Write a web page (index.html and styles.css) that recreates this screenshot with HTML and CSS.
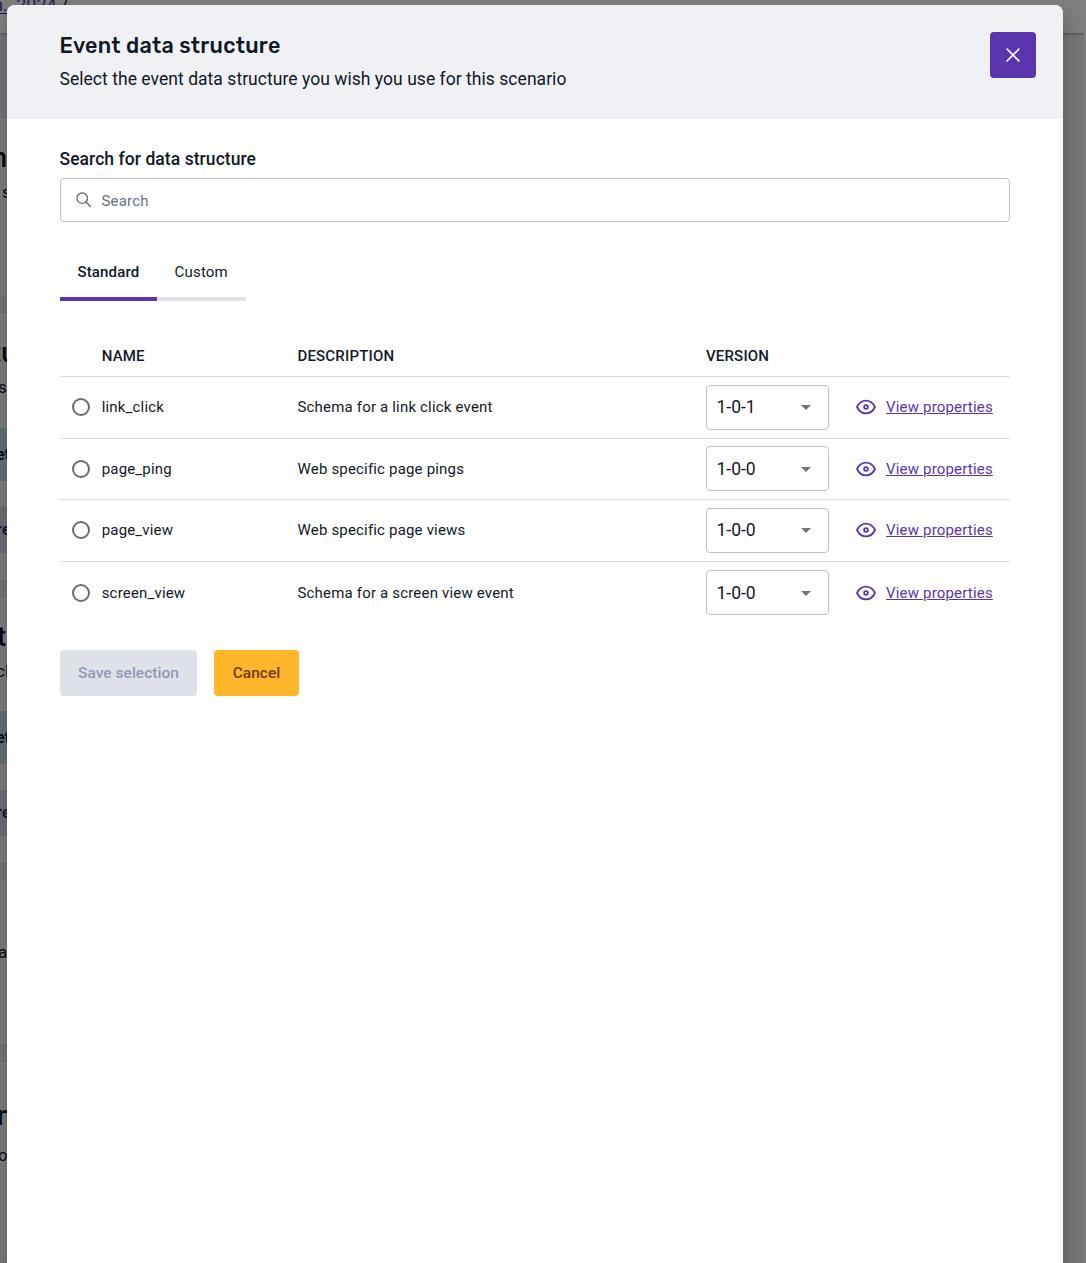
FILE: index.html
```html
<!DOCTYPE html>
<html lang="en">
<head>
<meta charset="utf-8">
<title>Event data structure</title>
<link rel="stylesheet" href="styles.css">
</head>
<body>
<svg class="defs" aria-hidden="true">
  <symbol id="eye" viewBox="0 0 20 16"><path d="M1 8C3 3.900 6.200 1.600 10 1.600S17 3.900 19 8c-2 4.100-5.200 6.400-9 6.400S3 12.100 1 8Z" fill="none" stroke="currentColor" stroke-width="1.800" stroke-linejoin="round"/><circle cx="10" cy="8" r="1.900" fill="none" stroke="currentColor" stroke-width="1.800"/></symbol>
</svg>
<div class="page" aria-hidden="true">
  <div class="crumbs"><a>n. 2024</a> /</div>
  <section class="panel first"><h3>n</h3><p class="inset">s</p></section>
  <section class="panel tall"><h3>tu</h3><p>s</p><div class="info">et</div><div class="pill">re</div></section>
  <section class="panel tall third"><h3>t</h3><p>cl</p><div class="info">et</div><div class="pill">re</div></section>
  <section class="panel fourth"><p>a</p></section>
  <section class="panel last"><h3>n</h3><p>o</p></section>
</div>
<div class="backdrop">
  <main class="dialog">
    <header class="head">
      <div class="heading">
        <h1>Event data structure</h1>
        <p>Select the event data structure you wish you use for this scenario</p>
      </div>
      <button class="close" aria-label="Close"><svg width="14" height="14" viewBox="0 0 14 14"><path d="M1 1l12 12M13 1L1 13" stroke="#fff" stroke-width="1.600" stroke-linecap="round"/></svg></button>
    </header>
    <div class="content">
      <label class="label">Search for data structure</label>
      <div class="search">
        <svg width="16" height="16" viewBox="0 0 16 16"><circle cx="6.200" cy="6.200" r="5.200" fill="none" stroke="#6c6c6c" stroke-width="1.400"/><path d="M10 10l4.500 4.500" stroke="#6c6c6c" stroke-width="1.500" stroke-linecap="round"/></svg>
        <span>Search</span>
      </div>
      <nav class="tabs"><div class="tab active">Standard</div><div class="tab">Custom</div></nav>
      <div class="table">
        <div class="row top"><span></span><span>NAME</span><span>DESCRIPTION</span><span>VERSION</span></div>
        <div class="row raised"><i class="radio"></i><span>link_click</span><span>Schema for a link click event</span><div class="select">1-0-1<i class="caret"></i></div><div class="view"><svg><use href="#eye"/></svg><a>View properties</a></div></div>
        <div class="row short"><i class="radio"></i><span>page_ping</span><span>Web specific page pings</span><div class="select">1-0-0<i class="caret"></i></div><div class="view"><svg><use href="#eye"/></svg><a>View properties</a></div></div>
        <div class="row raised"><i class="radio"></i><span>page_view</span><span>Web specific page views</span><div class="select">1-0-0<i class="caret"></i></div><div class="view"><svg><use href="#eye"/></svg><a>View properties</a></div></div>
        <div class="row end"><i class="radio"></i><span>screen_view</span><span>Schema for a screen view event</span><div class="select">1-0-0<i class="caret"></i></div><div class="view"><svg><use href="#eye"/></svg><a>View properties</a></div></div>
      </div>
      <div class="actions"><button class="save" disabled>Save selection</button><button class="cancel">Cancel</button></div>
    </div>
  </main>
</div>
</body>
</html>
```
FILE: styles.css
```css
* { box-sizing: border-box; }
body { margin: 0; height: 1263px; overflow: hidden; position: relative; font-family: Roboto, sans-serif; color: #111827; font-size: 15px; letter-spacing: .18px; }
h1, h3, p { margin: 0; font-weight: 400; }
button { border: 0; padding: 0; font: inherit; letter-spacing: inherit; }
.defs { position: absolute; width: 0; height: 0; }

.page { height: 1263px; width: 1084px; background: #eceff4; overflow: hidden; display: flex; flex-direction: column; box-shadow: 2px 0 #fff; }
.crumbs { flex: none; height: 33px; background: #fff; font-size: 18px; line-height: 9px; letter-spacing: 0; text-indent: -7px; margin-bottom: 85px; box-shadow: 0 1px 3px #0005; white-space: pre; }
.crumbs a { color: #5b35ad; text-decoration: underline; text-underline-offset: 2px; word-spacing: 4px; }
.panel { flex: none; width: 1034px; background: #fff; box-shadow: 0 0 2px #0003; margin-bottom: 17px; overflow: hidden; }
.panel h3 { font-size: 27px; line-height: 32px; font-weight: 500; padding-top: 24px; text-indent: -8px; }
.panel p { font-size: 17px; line-height: 20px; margin-top: 8px; text-indent: -2px; }
.panel p.inset { text-indent: 2px; }
.first { height: 178px; }
.tall { height: 267px; }
.third { height: 266px; }
.panel.third h3 { text-indent: -3px; }
.panel.third p { text-indent: -4px; }
.panel.fourth { height: 165px; }
.panel.fourth p { margin-top: 62px; }
.panel.last { height: 200px; }
.panel.last h3 { padding-top: 38px; text-indent: -3px; }
.panel.last p { margin-top: 13px; }
.info, .pill { font-size: 16px; font-weight: 700; text-indent: -4px; }
.info { height: 53px; line-height: 53px; margin-top: 31px; background: #c5e5ec; }
.third .info { margin-top: 30px; }
.pill { height: 46px; line-height: 46px; margin-top: 26px; background: #e3dcec; color: #45258f; }

.backdrop { position: absolute; inset: 0; background: #00000080; padding: 5px 23px 0 7px; }
.dialog { height: 1270px; background: #fff; border-radius: 8px 8px 0 0; overflow: hidden; box-shadow: 0 10px 22px 3px #0003; }
.head { height: 114px; background: #f0f1f5; display: flex; justify-content: space-between; padding: 27px 27px 0 52.5px; }
h1 { font-family: Rubik, Roboto, sans-serif; font-weight: 500; font-size: 21.500px; line-height: 28px; letter-spacing: .27px; }
.heading p { font-size: 17.500px; line-height: 24px; margin-top: 7px; letter-spacing: .04px; }
.close { width: 46px; height: 46px; border-radius: 4px; background: #5b35ad; display: grid; place-items: center; }
.content { padding: 28px 53px 0; }
.label { display: block; font-size: 17.500px; line-height: 24px; font-weight: 500; letter-spacing: .06px; margin-left: -.5px; }
.search { height: 44px; margin-top: 7px; border: 1px solid #bfbfbf; border-radius: 4px; display: flex; align-items: center; gap: 9.500px; padding-left: 15px; color: #667085; }
.search span { padding-top: 2px; }
.tabs { display: flex; margin-top: 30px; }
.tab { height: 49px; line-height: 40px; padding: 0 17.700px; border-bottom: 4px solid #dfe1e9; }
.active { font-weight: 500; border-color: #5b35ad; padding: 0 17.400px; }
.table { margin-top: 35px; }
.row { display: grid; grid-template-columns: 41.700px 195.800px 408.500px 150px 1fr; align-items: center; height: 62px; border-bottom: 1px solid #dcdcdc; }
.row.top { height: 41px; font-weight: 500; }
.row.short { height: 61px; }
.row.end { border: 0; }
.raised span, .raised .view { padding-bottom: 2px; }
.radio { width: 18px; height: 18px; border: 2px solid #6c6c6c; border-radius: 50%; margin-left: 12px; }
.raised .radio { margin-bottom: 1px; }
.select { width: 123px; height: 45px; border: 1px solid #bfbfbf; border-radius: 4px; display: flex; justify-content: space-between; align-items: center; padding: 0 17px 0 9.500px; font-size: 17.500px; letter-spacing: 0; }
.raised .select { padding-bottom: 1px; }
.short .select, .end .select { margin-bottom: 1px; padding-top: 1px; }
.caret { border: 5.500px solid transparent; border-top: 5px solid #737373; border-bottom: 0; }
.view { display: flex; align-items: center; gap: 10px; color: #5b35ad; }
.view svg { width: 20px; height: 16px; }
.view a { text-decoration: underline; }
.actions { display: flex; gap: 17px; margin-top: 26px; }
.actions button { height: 46px; border-radius: 4px; font-weight: 500; font-size: 15.500px; letter-spacing: .03px; }
.save { width: 137px; background: #e0e2ea; color: #8f9bb0; }
.cancel { width: 85px; background: #ffb62b; color: #713b12; }
```
